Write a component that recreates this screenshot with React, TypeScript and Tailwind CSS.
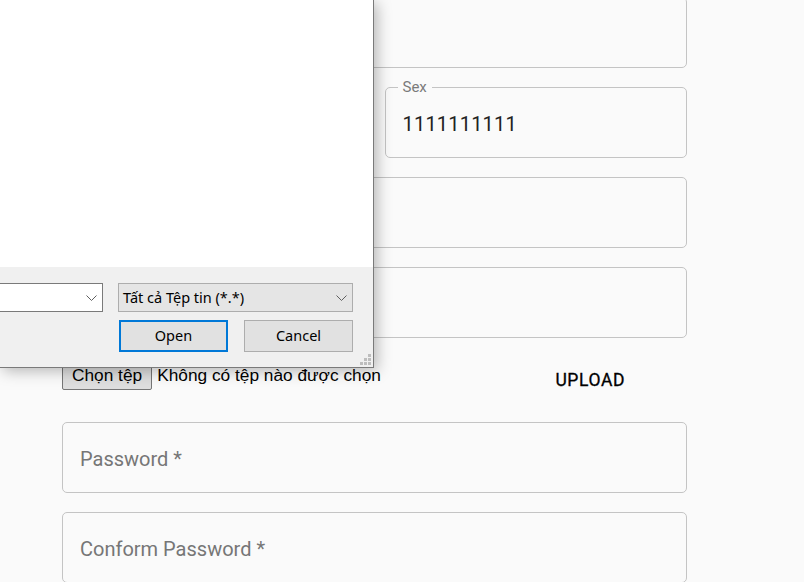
import React from 'react';

const ROBOTO = { fontFamily: 'Roboto, "Noto Sans", sans-serif' };

function Field({ label, value, placeholder }: { label?: string; value?: string; placeholder?: string }) {
  return (
    <div className="relative h-[71px] rounded-[5px] border border-[#c4c4c4] flex items-center px-[17px]">
      {label && (
        <span className="absolute left-[12px] top-[-10px] bg-[#fafafa] px-[5px] text-[15px] leading-[18px] text-[#7a7a7a]">
          {label}
        </span>
      )}
      {value && <span className="mt-[3px] text-[20px] text-[#222222] tracking-[0.2px]">{value}</span>}
      {placeholder && <span className="mt-[2px] text-[20px] text-[#767676]">{placeholder}</span>}
    </div>
  );
}

function Chevron() {
  return (
    <svg width="11" height="6" viewBox="0 0 11 6" className="shrink-0">
      <path d="M0.5 0.5 L5.5 5.5 L10.5 0.5" fill="none" stroke="#5f5f5f" strokeWidth="1" />
    </svg>
  );
}

function Gripper() {
  const dots = [
    [8, 0],
    [4, 4],
    [8, 4],
    [0, 8],
    [4, 8],
    [8, 8],
  ];
  return (
    <svg width="11" height="11" viewBox="0 0 11 11">
      {dots.map(([x, y], i) => (
        <rect key={i} x={x} y={y} width="3" height="3" fill="#bdbdbd" />
      ))}
    </svg>
  );
}

export default function App() {
  return (
    <div className="relative w-[804px] h-[582px] overflow-hidden bg-[#fafafa]" style={ROBOTO}>
      <div className="ml-[62px] mt-[-3px] w-[625px] flex flex-col gap-[19px]">
        <Field />
        <div className="grid grid-cols-2 gap-5">
          <Field />
          <Field label="Sex" value="1111111111" />
        </div>
        <Field />
        <Field />

        <div className="h-[46px] flex items-start">
          <div
            className="mt-[5px] flex items-center text-[17.3px] text-black"
            style={{ fontFamily: '"Liberation Sans", Arial, sans-serif' }}
          >
            <span className="h-[28px] px-[9px] flex items-center bg-[#dedede] border border-[#767676] rounded-[2px]">
              Chọn tệp
            </span>
            <span className="ml-[5px]">Không có tệp nào được chọn</span>
          </div>
          <span className="ml-auto mr-[62px] self-center mt-[1px] text-[17.5px] font-normal text-black tracking-[0.6px] [-webkit-text-stroke:0.3px_black]">
            UPLOAD
          </span>
        </div>

        <Field placeholder="Password *" />
        <Field placeholder="Conform Password *" />
      </div>

      {/* file picker dialog */}
      <div
        className="absolute left-0 top-0 w-[374px] h-[368px] flex flex-col border-r border-b border-[#7a7a7a] shadow-[3px_3px_14px_rgba(0,0,0,0.28)] text-black"
        style={{ fontFamily: '"Noto Sans", "Open Sans", sans-serif' }}
      >
        <div className="h-[267px] bg-white" />
        <div className="relative flex-1 bg-[#f0f0f0] pt-[16px]">
          <div className="flex">
            <div className="w-[103px] h-[29px] bg-white border border-l-0 border-[#7a7a7a] flex items-center justify-end pr-[5px]">
              <Chevron />
            </div>
            <div className="ml-[15px] w-[235px] h-[29px] bg-[#e5e5e5] border border-[#adadad] flex items-center justify-between pl-[4px] pr-[5px]">
              <span className="text-[14.5px] leading-none">Tất cả Tệp tin (*.*)</span>
              <Chevron />
            </div>
          </div>
          <div className="mt-[8px] flex justify-end gap-[16px] pr-[20px]">
            <div className="w-[109px] h-[32px] bg-[#e1e1e1] border-2 border-[#0078d7] flex items-center justify-center text-[14.5px]">
              Open
            </div>
            <div className="w-[109px] h-[32px] bg-[#e1e1e1] border border-[#adadad] flex items-center justify-center text-[14.5px]">
              Cancel
            </div>
          </div>
          <div className="absolute right-[2px] bottom-[2px]">
            <Gripper />
          </div>
        </div>
      </div>
    </div>
  );
}
